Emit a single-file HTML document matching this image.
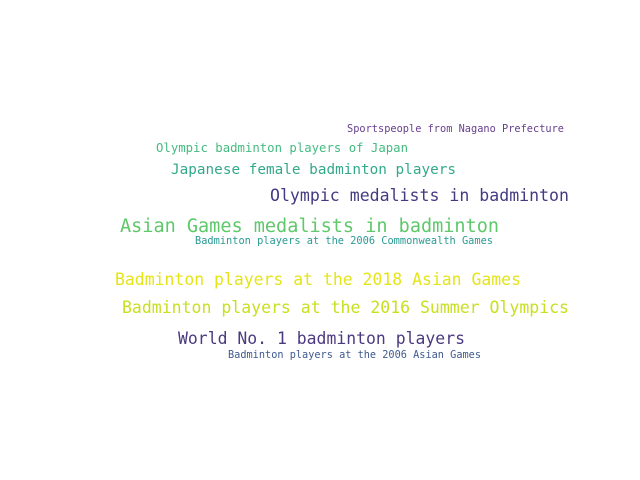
<!DOCTYPE html>
<html><head><style>html,body{margin:0;padding:0;background:#fff;width:640px;height:480px;overflow:hidden}</style></head>
<body>
<svg width="640" height="480" xmlns="http://www.w3.org/2000/svg" style="font-family:'DejaVu Sans Mono','Liberation Mono',monospace">
<text x="347" y="132" font-size="10.3" fill="#663f8e" textLength="217" lengthAdjust="spacingAndGlyphs">Sportspeople from Nagano Prefecture</text>
<text x="156" y="152" font-size="12.3" fill="#45bb80" textLength="252" lengthAdjust="spacingAndGlyphs">Olympic badminton players of Japan</text>
<text x="171" y="174" font-size="14.3" fill="#33a98a" textLength="285" lengthAdjust="spacingAndGlyphs">Japanese female badminton players</text>
<text x="270" y="201" font-size="16.6" fill="#443a83" textLength="299" lengthAdjust="spacingAndGlyphs">Olympic medalists in badminton</text>
<text x="120" y="232" font-size="18.5" fill="#5ec86a" textLength="379" lengthAdjust="spacingAndGlyphs">Asian Games medalists in badminton</text>
<text x="195" y="244" font-size="10.3" fill="#2a9a93" textLength="298" lengthAdjust="spacingAndGlyphs">Badminton players at the 2006 Commonwealth Games</text>
<text x="115" y="285" font-size="16.5" fill="#e5e419" textLength="406" lengthAdjust="spacingAndGlyphs">Badminton players at the 2018 Asian Games</text>
<text x="122" y="313" font-size="16.5" fill="#c8e020" textLength="447" lengthAdjust="spacingAndGlyphs">Badminton players at the 2016 Summer Olympics</text>
<text x="178" y="344" font-size="16.5" fill="#4b3a80" textLength="287" lengthAdjust="spacingAndGlyphs">World No. 1 badminton players</text>
<text x="228" y="358" font-size="10.3" fill="#3f5a8f" textLength="253" lengthAdjust="spacingAndGlyphs">Badminton players at the 2006 Asian Games</text>
</svg>
</body></html>
